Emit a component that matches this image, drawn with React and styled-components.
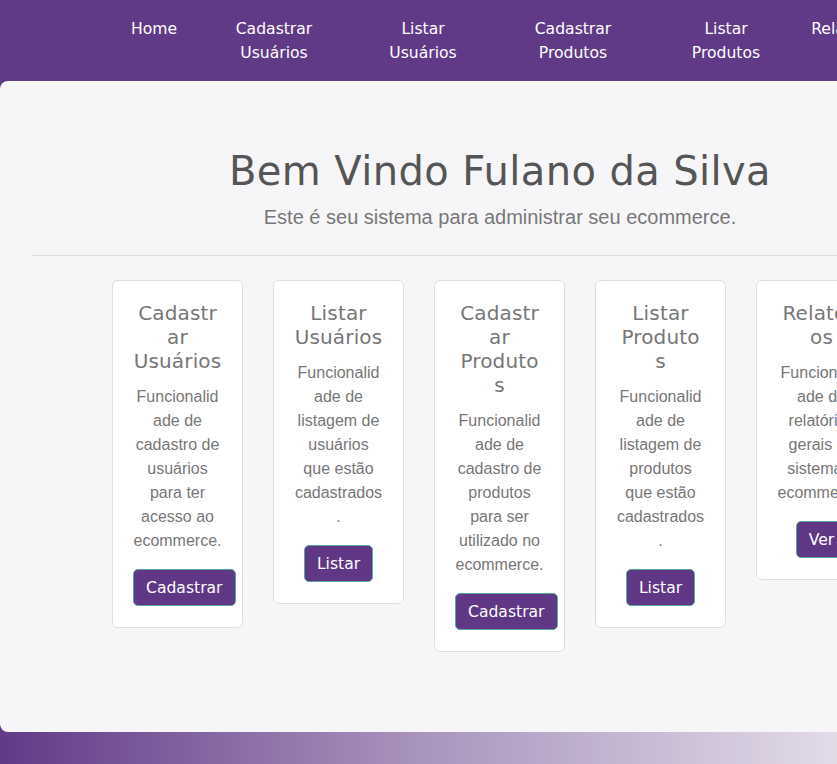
import styled, { createGlobalStyle } from "styled-components";

const GlobalStyle = createGlobalStyle`
  html, body {
    margin: 0;
    padding: 0;
    overflow: hidden;
  }
  body {
    font-family: "Liberation Sans", Arial, sans-serif;
    background: linear-gradient(to right, #613a87 0%, #a994bd 50%, #e2dbe8 100%);
    min-height: 764px;
  }
`;

const Header = styled.header`
  background-color: #613a87;
  height: 81px;
  box-sizing: border-box;
  padding-top: 17px;
`;

const NavList = styled.ul`
  list-style: none;
  margin: 0;
  padding: 0;
  display: flex;
  width: 1000px;
`;

const NavItem = styled.li`
  width: 90px;
  flex-shrink: 0;
  margin-left: ${(p) => p.$offset}px;
  text-align: center;
  color: #fff;
  font-family: "DejaVu Sans", sans-serif;
  font-size: 15.6px;
  line-height: 24px;
`;

const Panel = styled.main`
  background-color: #f6f6f8;
  width: 1000px;
  height: 651px;
  box-sizing: border-box;
  border-radius: 8px;
  padding: 64px 32px 0;
`;

const Title = styled.h1`
  margin: 0;
  text-align: center;
  font-family: "DejaVu Sans", sans-serif;
  font-weight: 400;
  font-size: 40px;
  letter-spacing: 0.4px;
  line-height: 52px;
  color: #555;
`;

const Subtitle = styled.p`
  margin: 6px 0 0;
  text-align: center;
  font-size: 20px;
  line-height: 28px;
  color: #777;
`;

const Divider = styled.hr`
  margin: 24px 0 24px;
  border: 0;
  border-top: 1px solid #dcdcdf;
`;

const CardRow = styled.div`
  display: flex;
  justify-content: center;
  align-items: flex-start;
  gap: 30px;
  margin-left: -1px;
`;

const Card = styled.div`
  width: 131px;
  flex-shrink: 0;
  box-sizing: border-box;
  background: #fff;
  border: 1px solid #dfdfe2;
  border-radius: 6px;
  padding: 20px 20px 21px;
  text-align: center;
`;

const CardTitle = styled.h5`
  margin: 0 0.5px 12px;
  font-family: "DejaVu Sans", sans-serif;
  font-weight: 400;
  font-size: 20px;
  letter-spacing: 0.15px;
  line-height: 24px;
  color: #777;
  overflow-wrap: break-word;
`;

const CardText = styled.p`
  margin: 0 0 16px;
  font-size: 16px;
  line-height: 24px;
  color: #777;
  overflow-wrap: break-word;
`;

const Button = styled.button`
  display: inline-flex;
  align-items: center;
  justify-content: center;
  box-sizing: border-box;
  height: 37px;
  background-color: #5f3785;
  color: #fff;
  border: 1px solid #58a99a;
  border-radius: 5px;
  padding: 0 12px;
  font-family: "DejaVu Sans", sans-serif;
  font-size: 15.6px;
  white-space: nowrap;
  cursor: pointer;
`;

const navItems = [
  { label: "Home", offset: 109 },
  { label: "Cadastrar Usuários", offset: 30 },
  { label: "Listar Usuários", offset: 59 },
  { label: "Cadastrar Produtos", offset: 60 },
  { label: "Listar Produtos", offset: 63 },
  { label: "Relatórios", offset: 34 },
];

const cards = [
  {
    title: "Cadastrar Usuários",
    text: "Funcionalidade de cadastro de usuários para ter acesso ao ecommerce.",
    action: "Cadastrar",
  },
  {
    title: "Listar Usuários",
    text: "Funcionalidade de listagem de usuários que estão cadastrados.",
    action: "Listar",
  },
  {
    title: "Cadastrar Produtos",
    text: "Funcionalidade de cadastro de produtos para ser utilizado no ecommerce.",
    action: "Cadastrar",
  },
  {
    title: "Listar Produtos",
    text: "Funcionalidade de listagem de produtos que estão cadastrados.",
    action: "Listar",
  },
  {
    title: "Relatórios",
    text: "Funcionalidade de relatórios gerais do sistema e ecommerce.",
    action: "Ver",
  },
];

export default function App() {
  return (
    <>
      <GlobalStyle />
      <Header>
        <NavList>
          {navItems.map((item) => (
            <NavItem key={item.label} $offset={item.offset}>
              {item.label}
            </NavItem>
          ))}
        </NavList>
      </Header>
      <Panel>
        <Title>Bem Vindo Fulano da Silva</Title>
        <Subtitle>Este é seu sistema para administrar seu ecommerce.</Subtitle>
        <Divider />
        <CardRow>
          {cards.map((card) => (
            <Card key={card.title}>
              <CardTitle>{card.title}</CardTitle>
              <CardText>{card.text}</CardText>
              <Button>{card.action}</Button>
            </Card>
          ))}
        </CardRow>
      </Panel>
    </>
  );
}
